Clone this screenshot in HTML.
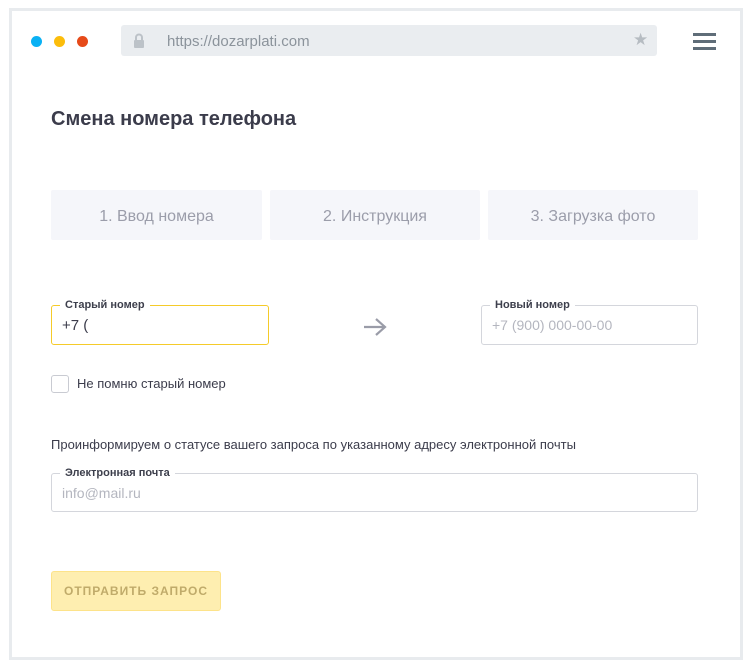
<!DOCTYPE html>
<html><head><meta charset="utf-8"><style>
*{box-sizing:border-box;margin:0;padding:0}
body{width:751px;height:667px;background:#fff;font-family:"Liberation Sans",sans-serif;position:relative;overflow:hidden}
.frame{position:absolute;left:9px;top:8px;width:734px;height:652px;border:3px solid #e8ebee}
.a{position:absolute}
.dot{width:11px;height:11px;border-radius:50%;top:36px}
.step{top:190px;height:50px;padding-top:3px;background:#f5f6fa;color:#9b9daa;font-size:16px;display:flex;align-items:center;justify-content:center;border-radius:2px}
.inp{border:1px solid #d4d6dc;border-radius:3px;height:40px}
.lbl{position:absolute;top:-8px;left:8px;background:#fff;padding:0 5px;font-size:11px;color:#3d3f4c;font-weight:bold;line-height:14px}
.ph{position:absolute;left:10px;top:11px;font-size:14px;color:#b4b6bf}
</style></head><body>
<div class="frame"></div>
<div class="a dot" style="left:31px;background:#0ab1f4"></div>
<div class="a dot" style="left:54px;background:#fcbd0b"></div>
<div class="a dot" style="left:77px;background:#e64a19"></div>
<div class="a" style="left:121px;top:25px;width:536px;height:31px;background:#eaedf0;border-radius:3px"></div>
<svg class="a" style="left:133px;top:33px" width="12" height="15" viewBox="0 0 12 15"><path d="M3 7V4.5a3 3 0 0 1 6 0V7" fill="none" stroke="#bcc2c8" stroke-width="2"/><rect x="1" y="7" width="10" height="8" rx="1" fill="#bcc2c8"/></svg>
<div class="a" style="left:167px;top:33px;font-size:15px;color:#8b939b">https://dozarplati.com</div>
<div class="a" style="left:633px;top:30px;font-size:17px;color:#b6bcc2">★</div>
<div class="a" style="left:693px;top:33px;width:23px;height:3px;background:#5f6d78"></div>
<div class="a" style="left:693px;top:40px;width:23px;height:3px;background:#5f6d78"></div>
<div class="a" style="left:693px;top:47px;width:23px;height:3px;background:#5f6d78"></div>
<div class="a" style="left:51px;top:108px;font-size:20px;font-weight:bold;color:#3b3c4b">Смена номера телефона</div>
<div class="a step" style="left:51px;width:211px">1. Ввод номера</div>
<div class="a step" style="left:270px;width:210px">2. Инструкция</div>
<div class="a step" style="left:488px;width:210px">3. Загрузка фото</div>
<div class="a inp" style="left:51px;top:305px;width:218px;border-color:#f5cb2a"><span class="lbl">Старый номер</span><span class="a" style="left:10px;top:11px;font-size:15px;color:#3b3c4b">+7 (</span></div>
<svg class="a" style="left:363px;top:317px" width="24" height="20" viewBox="0 0 24 20"><path d="M1 10H22M13 2l9 8-9 8" fill="none" stroke="#9a9ca8" stroke-width="2.2"/></svg>
<div class="a inp" style="left:481px;top:305px;width:217px"><span class="lbl">Новый номер</span><span class="ph">+7 (900) 000-00-00</span></div>
<div class="a" style="left:51px;top:375px;width:18px;height:18px;border:1px solid #c9cbd2;border-radius:3px"></div>
<div class="a" style="left:77px;top:376px;font-size:13px;color:#3b3c4b">Не помню старый номер</div>
<div class="a" style="left:51px;top:437px;font-size:13px;color:#3b3c4b">Проинформируем о статусе вашего запроса по указанному адресу электронной почты</div>
<div class="a inp" style="left:51px;top:473px;width:647px;height:39px"><span class="lbl">Электронная почта</span><span class="ph">info@mail.ru</span></div>
<div class="a" style="left:51px;top:571px;width:170px;height:40px;background:#feeeb0;border:1px solid #fde38a;border-radius:3px;color:#c0ab6a;font-size:12px;font-weight:bold;letter-spacing:1px;display:flex;align-items:center;justify-content:center">ОТПРАВИТЬ ЗАПРОС</div>
</body></html>
